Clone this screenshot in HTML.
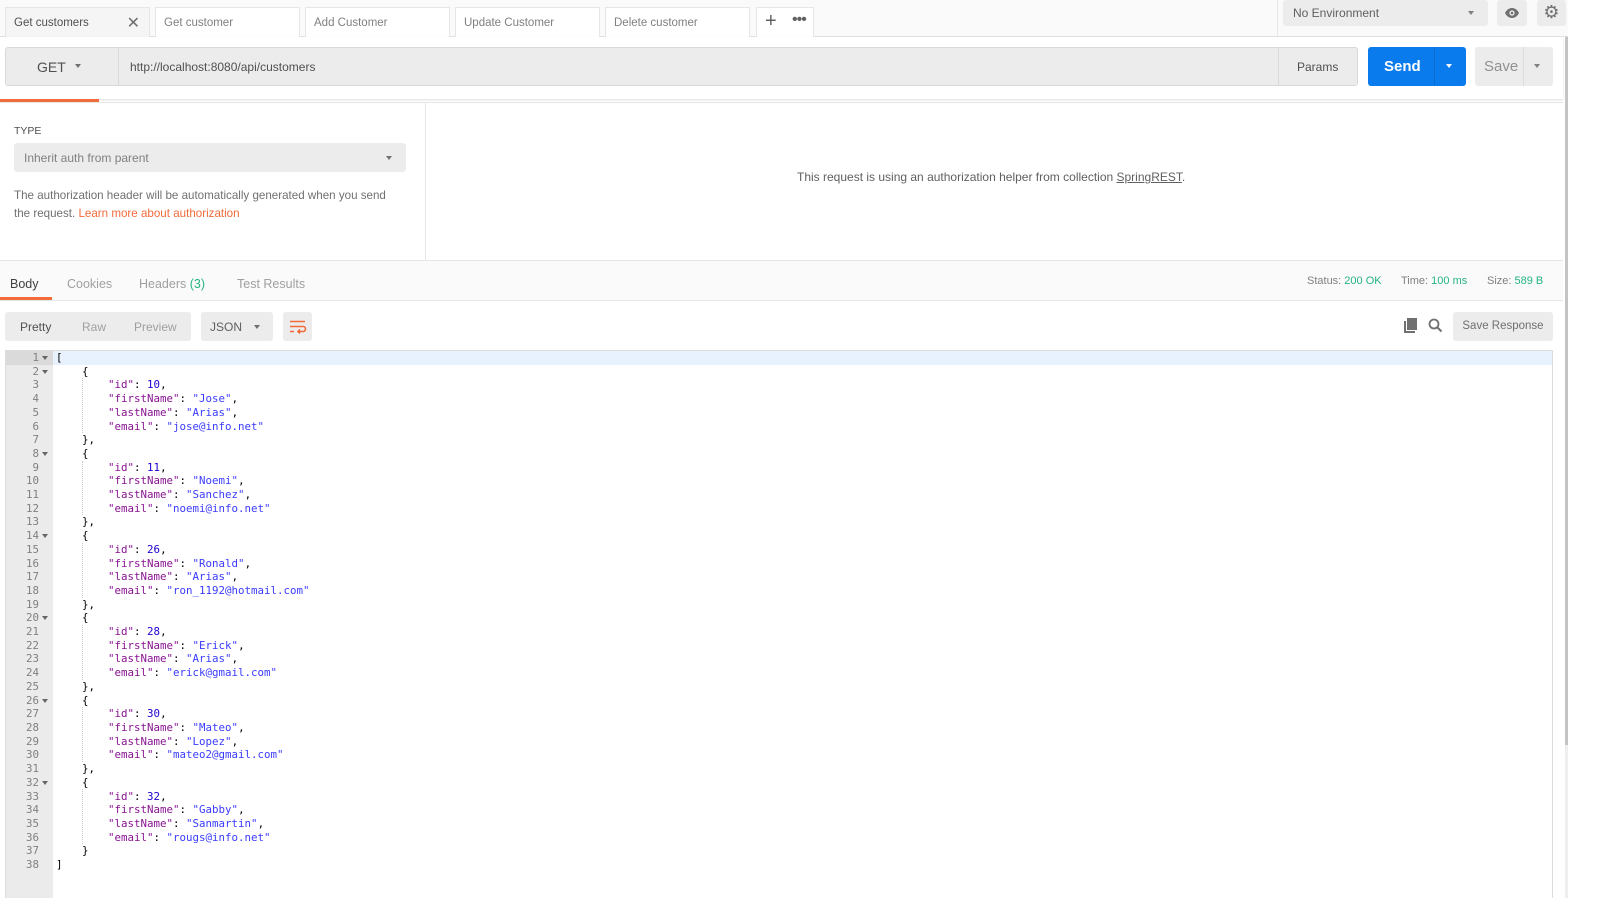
<!DOCTYPE html>
<html><head><meta charset="utf-8">
<style>
*{box-sizing:border-box;margin:0;padding:0}
body{width:1608px;height:898px;background:#fff;font-family:"Liberation Sans",sans-serif;color:#505050;position:relative;overflow:hidden}
.a{position:absolute}
.tab{position:absolute;top:7px;height:30px;background:#fff;border:1px solid #e6e6e6;border-bottom:none;font-size:11.5px;color:#808080;padding:9px 8px;white-space:nowrap}
.btn{position:absolute;background:#ececec;border-radius:3px;white-space:nowrap}
.code{position:absolute;left:56px;top:351px;font-family:"DejaVu Sans Mono","Liberation Mono",monospace;font-size:10.8px;line-height:13.7px;white-space:pre;color:#000}
.k{color:#881391}.s{color:#3b3bff}.n{color:#1c00cf}
.ln{position:absolute;left:6px;top:351px;width:47px;font-family:"DejaVu Sans Mono","Liberation Mono",monospace;font-size:10.8px;line-height:13.7px;color:#808080;text-align:right;padding-right:14px;white-space:pre}
.tri{display:inline-block;width:0;height:0;border-left:3.5px solid transparent;border-right:3.5px solid transparent;border-top:4px solid #707070;vertical-align:middle}
.ft{position:absolute;left:42px;width:0;height:0;border-left:3px solid transparent;border-right:3px solid transparent;border-top:4px solid #666}
.g{position:absolute;left:82px;width:0;border-left:1px dotted #c8c8c8;height:54.8px}
</style></head><body>
<div class="a" style="left:0;top:0;width:1568px;height:37px;background:#fafafa;border-bottom:1px solid #e0e0e0"></div>
<div class="tab" style="left:5px;width:145px;background:#f5f5f5;color:#505050">Get customers<span style="position:absolute;right:9px;top:5px;font-size:16px;color:#707070">✕</span></div>
<div class="tab" style="left:155px;width:145px">Get customer</div>
<div class="tab" style="left:305px;width:145px">Add Customer</div>
<div class="tab" style="left:455px;width:145px">Update Customer</div>
<div class="tab" style="left:605px;width:145px">Delete customer</div>
<div class="tab" style="left:756px;width:58px;padding:0">
 <span style="position:absolute;left:8px;top:2px;font-size:20px;color:#606060">+</span>
 <span style="position:absolute;left:35px;top:3px;font-size:16px;color:#606060;letter-spacing:-1px">•••</span>
</div>
<div class="a" style="left:1277px;top:0;width:1px;height:37px;background:#e6e6e6"></div>
<div class="btn" style="left:1283px;top:0;width:205px;height:26px;font-size:12px;color:#606060;padding:6px 10px">No Environment<span class="tri" style="position:absolute;right:14px;top:11px;border-top-color:#808080"></span></div>
<div class="btn" style="left:1497px;top:0;width:30px;height:26px">
 <svg class="a" style="left:7px;top:7px" width="16" height="12" viewBox="0 0 16 12"><path d="M1 6C3 2 6 1 8 1s5 1 7 5c-2 4-5 5-7 5S3 10 1 6z" fill="#707070"/><circle cx="8" cy="6" r="2.6" fill="#ececec"/><circle cx="8" cy="6" r="1.3" fill="#707070"/></svg>
</div>
<div class="btn" style="left:1537px;top:0;width:29px;height:26px;font-size:18px;color:#707070;text-align:center;line-height:24px">⚙</div>

<div class="a" style="left:0;top:37px;width:1563px;height:62px;background:#fff;box-shadow:0 1px 2px #ddd"></div>
<div class="a" style="left:5px;top:47px;width:1353px;height:39px;background:#ececec;border:1px solid #d9d9d9;border-radius:3px"></div>
<div class="a" style="left:118px;top:47px;width:1px;height:39px;background:#d9d9d9"></div>
<div class="a" style="left:1278px;top:47px;width:1px;height:39px;background:#d9d9d9"></div>
<div class="a" style="left:37px;top:59px;font-size:14px;color:#505050">GET</div>
<span class="tri a" style="left:75px;top:64px"></span>
<div class="a" style="left:130px;top:60px;font-size:12px;color:#505050">http://localhost:8080/api/customers</div>
<div class="a" style="left:1297px;top:60px;font-size:12px;color:#505050">Params</div>
<div class="a" style="left:1368px;top:47px;width:98px;height:39px;background:#097bed;border-radius:3px"></div>
<div class="a" style="left:1434px;top:47px;width:1px;height:39px;background:#0a6cd0"></div>
<div class="a" style="left:1384px;top:58px;font-size:15px;font-weight:bold;color:#fff">Send</div>
<span class="tri a" style="left:1446px;top:64px;border-top-color:#fff"></span>
<div class="btn" style="left:1475px;top:47px;width:78px;height:39px"></div>
<div class="a" style="left:1523px;top:47px;width:1px;height:39px;background:#ddd"></div>
<div class="a" style="left:1484px;top:58px;font-size:15px;color:#909090">Save</div>
<span class="tri a" style="left:1534px;top:64px;border-top-color:#808080"></span>
<div class="a" style="left:0;top:99px;width:99px;height:3px;background:#f26b3a"></div>

<div class="a" style="left:0;top:102px;width:1563px;height:1px;background:#e6e6e6"></div>
<div class="a" style="left:425px;top:103px;width:1px;height:157px;background:#e6e6e6"></div>
<div class="a" style="left:14px;top:125px;font-size:10.5px;color:#505050">TYPE</div>
<div class="btn" style="left:14px;top:143px;width:392px;height:29px;font-size:12px;color:#808080;padding:8px 10px">Inherit auth from parent<span class="tri" style="position:absolute;right:14px;top:13px"></span></div>
<div class="a" style="left:14px;top:187px;width:385px;font-size:11.6px;line-height:18px;color:#707070">The authorization header will be automatically generated when you send the request. <span style="color:#f26b3a">Learn more about authorization</span></div>
<div class="a" style="left:797px;top:170px;font-size:12px;color:#606060;white-space:nowrap">This request is using an authorization helper from collection <u>SpringREST</u>.</div>

<div class="a" style="left:0;top:260px;width:1563px;height:41px;background:#fafafa;border-top:1px solid #e6e6e6;border-bottom:1px solid #e6e6e6"></div>
<div class="a" style="left:10px;top:277px;font-size:12.5px;color:#404040">Body</div>
<div class="a" style="left:0;top:297px;width:52px;height:3px;background:#f26b3a"></div>
<div class="a" style="left:67px;top:277px;font-size:12.5px;color:#a0a0a0">Cookies</div>
<div class="a" style="left:139px;top:277px;font-size:12.5px;color:#a0a0a0">Headers <span style="color:#26b47f">(3)</span></div>
<div class="a" style="left:237px;top:277px;font-size:12.5px;color:#a0a0a0">Test Results</div>
<div class="a" style="left:1307px;top:275px;font-size:11px;color:#808080">Status: <span style="color:#26b47f">200 OK</span></div>
<div class="a" style="left:1401px;top:275px;font-size:11px;color:#808080">Time: <span style="color:#26b47f">100 ms</span></div>
<div class="a" style="left:1487px;top:275px;font-size:11px;color:#808080">Size: <span style="color:#26b47f">589 B</span></div>

<div class="btn" style="left:5px;top:312px;width:186px;height:29px"></div>
<div class="a" style="left:20px;top:320px;font-size:12px;color:#505050">Pretty</div>
<div class="a" style="left:82px;top:320px;font-size:12px;color:#a0a0a0">Raw</div>
<div class="a" style="left:134px;top:320px;font-size:12px;color:#a0a0a0">Preview</div>
<div class="btn" style="left:201px;top:312px;width:72px;height:29px;font-size:12px;color:#606060;padding:8px 9px">JSON<span class="tri" style="position:absolute;right:13px;top:13px"></span></div>
<div class="btn" style="left:283px;top:312px;width:29px;height:29px">
 <svg class="a" style="left:6px;top:8px" width="18" height="14" viewBox="0 0 18 14"><path d="M1 1.5h15M1 6.5h13a2.5 2.5 0 0 1 0 5H9M1 11.5h4M11 9.5l-2 2 2 2" stroke="#f26b3a" stroke-width="1.6" fill="none"/></svg>
</div>
<svg class="a" style="left:1403px;top:318px" width="15" height="15" viewBox="0 0 15 15"><path d="M1 3h2v10h9v2H1z" fill="#707070"/><rect x="4" y="0" width="10" height="12" fill="#707070"/></svg>
<svg class="a" style="left:1428px;top:318px" width="15" height="15" viewBox="0 0 15 15"><circle cx="6" cy="6" r="4.5" stroke="#707070" stroke-width="1.8" fill="none"/><path d="M9.5 9.5l4 4" stroke="#707070" stroke-width="2"/></svg>
<div class="btn" style="left:1453px;top:312px;width:100px;height:29px;font-size:11.5px;color:#707070;padding:8px 0;text-align:center">Save Response</div>

<div class="a" style="left:5px;top:350px;width:1548px;height:548px;border:1px solid #dcdcdc;border-bottom:none;background:#fff"></div>
<div class="a" style="left:6px;top:351px;width:47px;height:547px;background:#ebebeb"></div>
<div class="a" style="left:6px;top:351px;width:47px;height:14px;background:#dadada"></div>
<div class="a" style="left:53px;top:351px;width:1499px;height:14px;background:#e8f2fe"></div>
<div class="ln">1
2
3
4
5
6
7
8
9
10
11
12
13
14
15
16
17
18
19
20
21
22
23
24
25
26
27
28
29
30
31
32
33
34
35
36
37
38</div>
<div class="ft" style="top:356px"></div>
<div class="ft" style="top:369.7px"></div>
<div class="ft" style="top:451.9px"></div>
<div class="ft" style="top:534.1px"></div>
<div class="ft" style="top:616.3px"></div>
<div class="ft" style="top:698.5px"></div>
<div class="ft" style="top:780.7px"></div>
<div class="g" style="top:378.4px"></div>
<div class="g" style="top:460.6px"></div>
<div class="g" style="top:542.8px"></div>
<div class="g" style="top:625px"></div>
<div class="g" style="top:707.2px"></div>
<div class="g" style="top:789.4px"></div>
<div class="code">[
    {
        <span class="k">"id"</span>: <span class="n">10</span>,
        <span class="k">"firstName"</span>: <span class="s">"Jose"</span>,
        <span class="k">"lastName"</span>: <span class="s">"Arias"</span>,
        <span class="k">"email"</span>: <span class="s">"jose@info.net"</span>
    },
    {
        <span class="k">"id"</span>: <span class="n">11</span>,
        <span class="k">"firstName"</span>: <span class="s">"Noemi"</span>,
        <span class="k">"lastName"</span>: <span class="s">"Sanchez"</span>,
        <span class="k">"email"</span>: <span class="s">"noemi@info.net"</span>
    },
    {
        <span class="k">"id"</span>: <span class="n">26</span>,
        <span class="k">"firstName"</span>: <span class="s">"Ronald"</span>,
        <span class="k">"lastName"</span>: <span class="s">"Arias"</span>,
        <span class="k">"email"</span>: <span class="s">"ron_1192@hotmail.com"</span>
    },
    {
        <span class="k">"id"</span>: <span class="n">28</span>,
        <span class="k">"firstName"</span>: <span class="s">"Erick"</span>,
        <span class="k">"lastName"</span>: <span class="s">"Arias"</span>,
        <span class="k">"email"</span>: <span class="s">"erick@gmail.com"</span>
    },
    {
        <span class="k">"id"</span>: <span class="n">30</span>,
        <span class="k">"firstName"</span>: <span class="s">"Mateo"</span>,
        <span class="k">"lastName"</span>: <span class="s">"Lopez"</span>,
        <span class="k">"email"</span>: <span class="s">"mateo2@gmail.com"</span>
    },
    {
        <span class="k">"id"</span>: <span class="n">32</span>,
        <span class="k">"firstName"</span>: <span class="s">"Gabby"</span>,
        <span class="k">"lastName"</span>: <span class="s">"Sanmartin"</span>,
        <span class="k">"email"</span>: <span class="s">"rougs@info.net"</span>
    }
]</div>
<div class="a" style="left:1565px;top:37px;width:3px;height:708px;background:#c4c4c4"></div>
<div class="a" style="left:1565px;top:745px;width:3px;height:153px;background:#eee"></div>
</body></html>
